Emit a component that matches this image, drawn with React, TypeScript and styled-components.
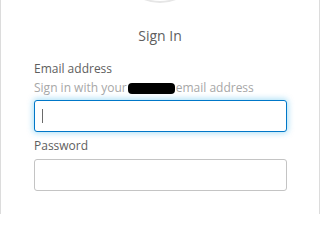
import React from 'react';
import styled, { createGlobalStyle } from 'styled-components';

const GlobalStyle = createGlobalStyle`
  html, body {
    margin: 0;
    padding: 0;
    background: #ffffff;
  }
  body {
    font-family: 'Open Sans', 'DejaVu Sans', sans-serif;
  }
`;

const Card = styled.div`
  box-sizing: border-box;
  width: 320px;
  height: 214px;
  border-left: 1px solid #dcdcdc;
  border-right: 1px solid #dcdcdc;
  overflow: hidden;
  display: flex;
  flex-direction: column;
`;

const LogoRing = styled.div`
  align-self: center;
  width: 84px;
  height: 84px;
  margin-top: -81px;
  border-radius: 50%;
  border: 2px solid #e6e6e6;
  background: #ffffff;
  box-sizing: border-box;
`;

const Title = styled.h2`
  margin: 23px 0 0;
  font-size: 14px;
  font-weight: 500;
  line-height: 20px;
  text-align: center;
  color: #5e5e5e;
`;

const Form = styled.form`
  padding: 14px 32px 0 33px;
  display: flex;
  flex-direction: column;
`;

const Field = styled.div<{ $gap?: number }>`
  display: flex;
  flex-direction: column;
  margin-top: ${p => p.$gap ?? 0}px;
`;

const Label = styled.label`
  font-size: 12px;
  line-height: 18px;
  color: #5e5e5e;
  margin-bottom: 1px;
`;

const Hint = styled.div`
  font-size: 12px;
  line-height: 18px;
  color: #a7a7a7;
  display: flex;
  align-items: center;
  white-space: nowrap;
`;

const Redacted = styled.span`
  display: inline-block;
  width: 47px;
  height: 11px;
  margin: 0 1px;
  border-radius: 4px;
  background: #000000;
`;

const Input = styled.div<{ $focused?: boolean }>`
  box-sizing: border-box;
  height: 32px;
  margin-top: 3px;
  border-radius: 3px;
  border: 1px solid ${p => (p.$focused ? '#0077c8' : '#c4c4c4')};
  box-shadow: ${p => (p.$focused ? '0 0 6px 1px rgba(0, 160, 230, 0.35)' : 'none')};
  background: #ffffff;
  display: flex;
  align-items: center;
  padding-left: 7px;
`;

const Caret = styled.span`
  width: 1px;
  height: 14px;
  background: #6a6a6a;
`;

export default function App() {
  return (
    <>
      <GlobalStyle />
      <Card>
        <LogoRing />
        <Title>Sign In</Title>
        <Form>
          <Field>
            <Label>Email address</Label>
            <Hint>
              Sign in with your<Redacted />email address
            </Hint>
            <Input $focused>
              <Caret />
            </Input>
          </Field>
          <Field $gap={5}>
            <Label>Password</Label>
            <Input />
          </Field>
        </Form>
      </Card>
    </>
  );
}
